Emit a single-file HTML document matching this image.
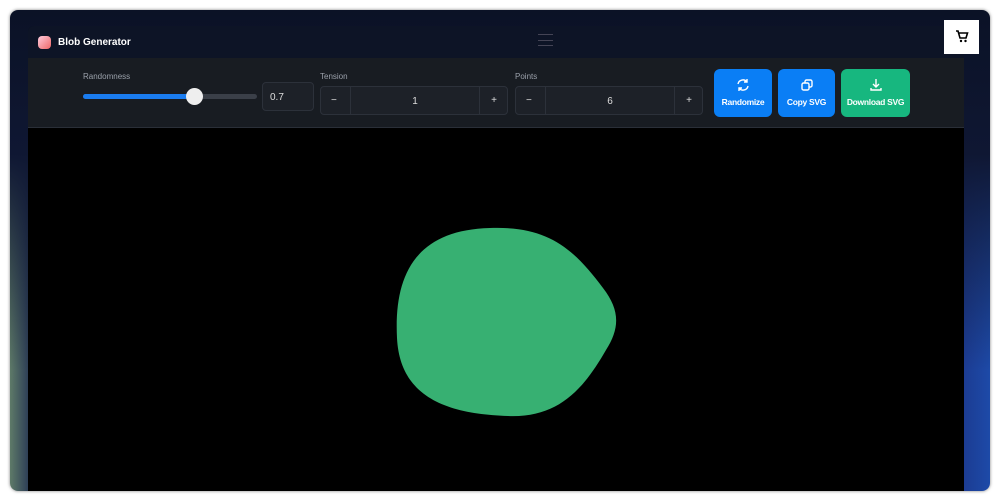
<!DOCTYPE html>
<html><head><style>
*{margin:0;padding:0;box-sizing:border-box}
body{width:1000px;height:500px;background:#fff;font-family:"Liberation Sans",sans-serif;position:relative;overflow:hidden}
.frame{position:absolute;left:10px;top:10px;width:980px;height:481px;border-radius:8px;overflow:hidden;
background:linear-gradient(180deg,#0b1226 0%,#0f1733 30%,rgba(15,23,51,0) 75%),linear-gradient(90deg,#5e7a68 0%,#2a3a55 2%,#1a2448 50%,#1c3a90 97%,#1d4aa8 100%);box-shadow:0 0 3px rgba(0,0,0,.5)}
.app{position:absolute;left:18px;top:16px;width:936px;height:470px;background:#0e1320;border-radius:6px 6px 0 0;overflow:hidden}
.hdr{height:32px;background:#0d1426;display:flex;align-items:center;padding-left:10px;color:#fff;font-weight:bold;font-size:10px}
.logo{width:13px;height:13px;border-radius:4px;background:linear-gradient(135deg,#fcd,#e66);margin-right:7px}
.tb{position:absolute;top:32px;left:0;width:936px;height:70px;background:#181c22;border-bottom:1px solid #2a2f38}
.lbl{position:absolute;font-size:8px;color:#9aa0aa}
.box{position:absolute;border:1px solid #2c313a;background:#1d2128;border-radius:4px;color:#ddd;font-size:10px}
.btn{position:absolute;top:11px;height:48px;border-radius:6px;color:#fff;font-size:8.5px;font-weight:bold;text-align:center;letter-spacing:-.3px}
.canvas{position:absolute;top:102px;left:0;width:936px;height:370px;background:#000}
</style></head><body>
<div class="frame">
<div class="app">
<div class="hdr"><div class="logo"></div>Blob Generator</div>
<div style="position:absolute;left:510px;top:8px;width:15px;height:12px;border-top:1px solid #445;border-bottom:1px solid #445"><div style="margin-top:5px;height:1px;background:#445"></div></div>
<div class="tb">
<div class="lbl" style="left:55px;top:14px">Randomness</div>
<div style="position:absolute;left:55px;top:36px;width:174px;height:5px;border-radius:3px;background:#3a3f48"><div style="width:112px;height:5px;border-radius:3px;background:#1a7cf0"></div></div>
<div style="position:absolute;left:158px;top:30px;width:17px;height:17px;border-radius:50%;background:#eee"></div>
<div class="box" style="left:234px;top:24px;width:52px;height:29px;padding:9px 7px">0.7</div>
<div class="lbl" style="left:292px;top:14px">Tension</div>
<div class="box" style="left:292px;top:28px;width:188px;height:29px"><span style="position:absolute;left:10px;top:8px">−</span><div style="position:absolute;left:29px;top:0;width:130px;height:27px;border-left:1px solid #2c313a;border-right:1px solid #2c313a;text-align:center;padding-top:9px">1</div><span style="position:absolute;right:10px;top:8px">+</span></div>
<div class="lbl" style="left:487px;top:14px">Points</div>
<div class="box" style="left:487px;top:28px;width:188px;height:29px"><span style="position:absolute;left:10px;top:8px">−</span><div style="position:absolute;left:29px;top:0;width:130px;height:27px;border-left:1px solid #2c313a;border-right:1px solid #2c313a;text-align:center;padding-top:9px">6</div><span style="position:absolute;right:10px;top:8px">+</span></div>
<div class="btn" style="left:686px;width:58px;background:#0a7ef5"><svg width="16" height="16" viewBox="0 0 16 16" style="margin-top:8px" fill="none" stroke="#fff" stroke-width="1.4"><path d="M3 7a5 5 0 0 1 9-2M13 9a5 5 0 0 1-9 2M12 2v3h-3M4 14v-3h3"/></svg><div style="margin-top:2px">Randomize</div></div>
<div class="btn" style="left:750px;width:57px;background:#0a7ef5"><svg width="16" height="16" viewBox="0 0 16 16" style="margin-top:8px" fill="none" stroke="#fff" stroke-width="1.4"><rect x="3" y="6" width="7" height="7" rx="1.5"/><path d="M6 6V4.5A1.5 1.5 0 0 1 7.5 3h4A1.5 1.5 0 0 1 13 4.5v4A1.5 1.5 0 0 1 11.5 10H10"/></svg><div style="margin-top:2px">Copy SVG</div></div>
<div class="btn" style="left:813px;width:69px;background:#17b77f"><svg width="16" height="16" viewBox="0 0 16 16" style="margin-top:8px" fill="none" stroke="#fff" stroke-width="1.4"><path d="M8 2v8M5 7l3 3 3-3M3 11v2h10v-2"/></svg><div style="margin-top:2px">Download SVG</div></div>
</div>
<div class="canvas">
<svg width="936" height="370" style="position:absolute;left:0;top:0"><path d="M462 100 C520 98 545 120 575 160 C592 182 592 200 578 222 C555 262 530 290 480 288 C420 286 372 270 369 210 C366 150 385 102 462 100 Z" fill="#37b072"/></svg>
</div>
</div>
<div style="position:absolute;left:934px;top:10px;width:35px;height:34px;background:#fff;text-align:center;padding-top:9px"><svg width="14" height="14" viewBox="0 0 14 14"><path d="M1 2h2l2 7h6l1.5-5H4" fill="none" stroke="#000" stroke-width="1.6"/><circle cx="6" cy="12" r="1.2"/><circle cx="10.5" cy="12" r="1.2"/></svg></div>
</div>
</body></html>
